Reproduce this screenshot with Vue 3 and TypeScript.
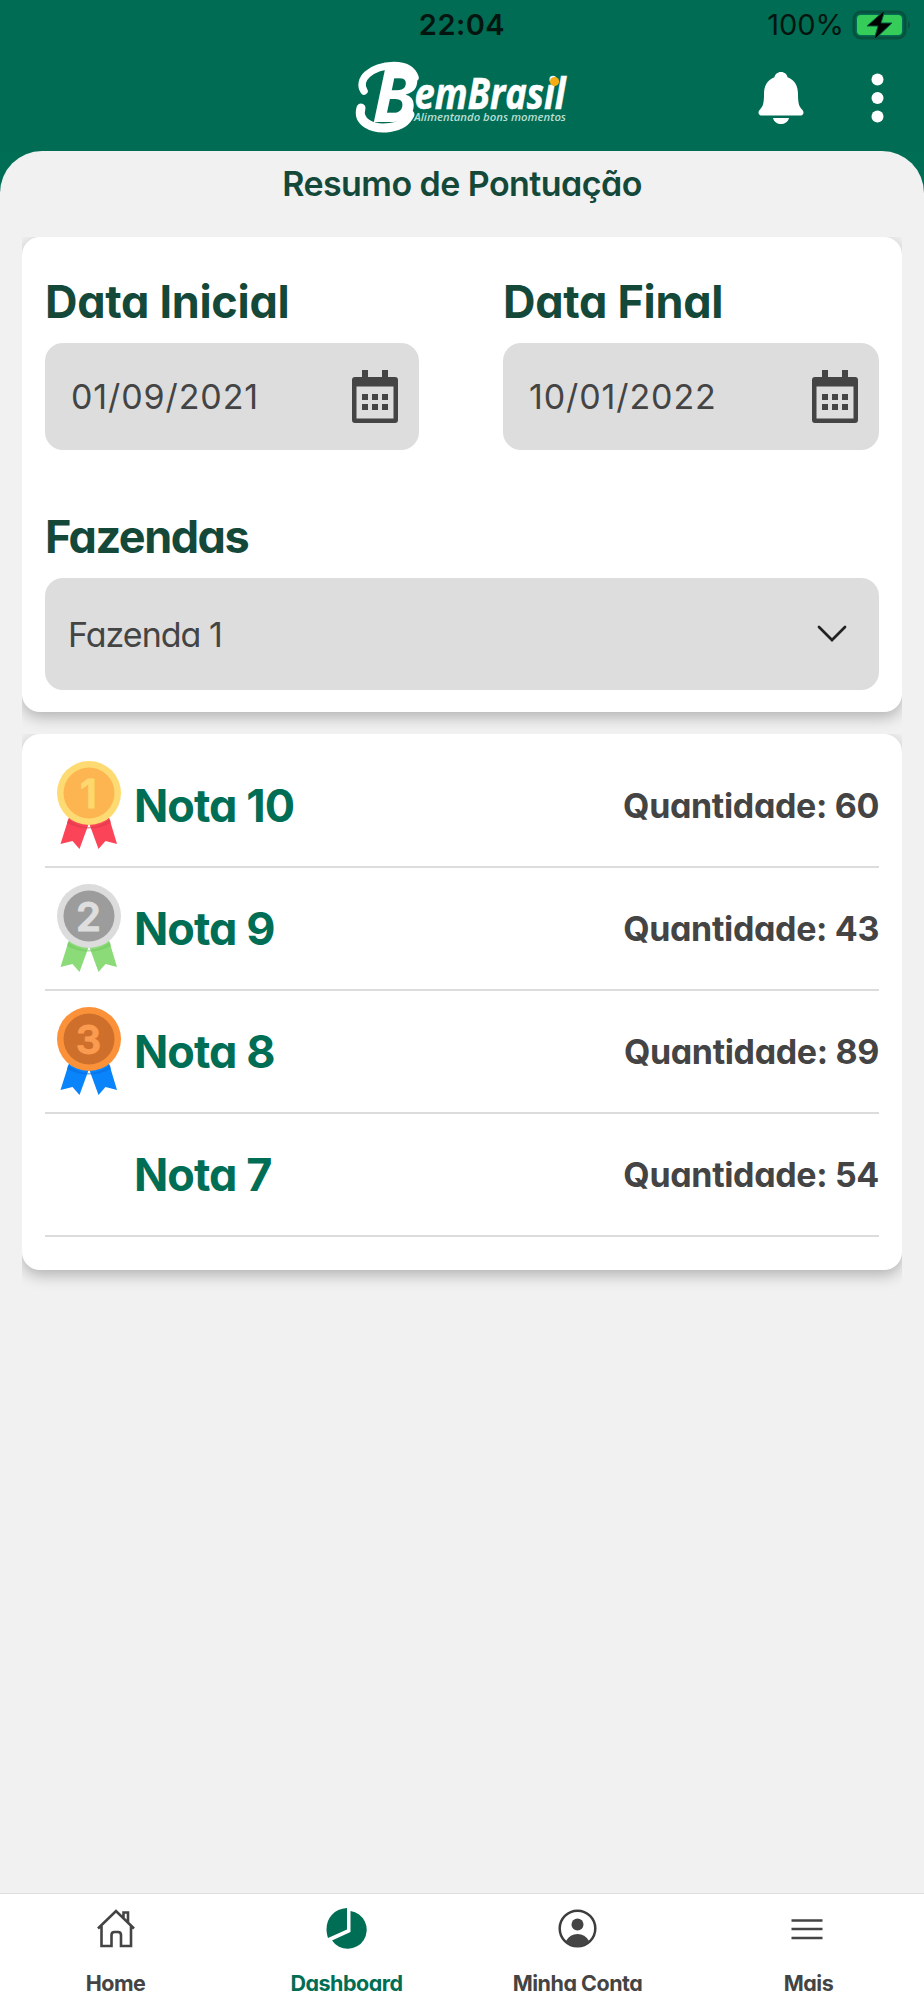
<script setup lang="ts">
interface ScoreRow {
  grade: number
  amount: number
  medal?: { place: number; rim: string; face: string; digit: string; ribbon: string; fold: string }
}

const dates: { label: string; value: string }[] = [
  { label: 'Data Inicial', value: '01/09/2021' },
  { label: 'Data Final', value: '10/01/2022' },
]

const rows: ScoreRow[] = [
  { grade: 10, amount: 60, medal: { place: 1, rim: '#fedb72', face: '#fdb552', digit: '#fed86e', ribbon: '#fc4458', fold: '#d83a49' } },
  { grade: 9, amount: 43, medal: { place: 2, rim: '#dcdcdd', face: '#9c9c9c', digit: '#dedede', ribbon: '#8bdb78', fold: '#73c75e' } },
  { grade: 8, amount: 89, medal: { place: 3, rim: '#fb923a', face: '#ce702c', digit: '#fb9b50', ribbon: '#0a84fb', fold: '#056ce0' } },
  { grade: 7, amount: 54 },
]
</script>

<template>
  <div class="screen">
    <header class="top">
      <div class="status">
        <span></span>
        <span class="clock">22:04</span>
        <span class="power">
          <span class="percent">100%</span>
          <svg width="62" height="34" viewBox="0 0 62 34">
            <rect x="2" y="4" width="51" height="26" rx="7" fill="none" stroke="#07523f" stroke-width="3" />
            <rect x="5" y="7" width="45" height="20" rx="4" fill="#35cc59" />
            <path d="M56 13q4 4 0 8z" fill="#07523f" />
            <path d="M33 2 15 18h11l-4 14 18-17H29z" fill="#000" stroke="#075b43" stroke-width="1" />
          </svg>
        </span>
      </div>
      <div class="brandbar">
        <span></span>
        <svg class="logo" width="216" height="76" viewBox="0 0 216 76">
          <path d="M10 31C3 20 16 6 40 5.500q17 0 21 12" fill="none" stroke="#fff" stroke-width="7.500" stroke-linecap="round" />
          <path d="M7 48C3 62 18 70 36 67.500q15-2 20-13" fill="none" stroke="#fff" stroke-width="9" stroke-linecap="round" />
          <text class="initial" x="18" y="62" textLength="46" lengthAdjust="spacingAndGlyphs">B</text>
          <text class="word" x="60.500" y="49" textLength="151" lengthAdjust="spacingAndGlyphs">emBrasil</text>
          <circle cx="200.500" cy="21.500" r="4.600" fill="#f6ad16" />
          <text class="motto" x="60" y="61" textLength="152" lengthAdjust="spacingAndGlyphs">Alimentando bons momentos</text>
        </svg>
        <span class="actions">
          <svg width="46" height="54" viewBox="0 0 46 54">
            <path d="M23 1c3.600 0 6 2.300 6.600 5.200C37 9 40 15 40 23c0 9 1 12.500 4 15.500 2.800 3 1.300 6-2 6H4c-3.300 0-4.800-3-2-6C5 35.500 6 32 6 23 6 15 9 9 16.400 6.200 17 3.300 19.400 1 23 1ZM15 47h16c-1 4-4.500 6-8 6s-7-2-8-6Z" fill="#fff" />
          </svg>
          <svg width="14" height="52" viewBox="0 0 14 52">
            <circle v-for="n in 3" :key="n" cx="7.500" :cy="7.500 + (n - 1) * 18.500" r="6" fill="#fff" />
          </svg>
        </span>
      </div>
    </header>

    <main class="sheet">
      <h1>Resumo de Pontuação</h1>

      <section class="card filters">
        <div class="dates">
          <label v-for="d in dates" :key="d.label" class="field">
            <span class="caption">{{ d.label }}</span>
            <span class="box">
              <span>{{ d.value }}</span>
              <svg width="48" height="55" viewBox="0 0 48 55">
                <path fill-rule="evenodd" fill="#444" d="M11 1h6v7h14V1h6v7h7q3 0 3 3v40q0 3-3 3H4q-3 0-3-3V11q0-3 3-3h7ZM5.500 17.500v32h37v-32Z" />
                <path fill="#444" d="M11 25h6v6h-6zM21 25h6v6h-6zM31 25h6v6h-6zM11 35h6v6h-6zM21 35h6v6h-6zM31 35h6v6h-6z" />
              </svg>
            </span>
          </label>
        </div>
        <label class="field farm">
          <span class="caption">Fazendas</span>
          <span class="box">
            <span>Fazenda 1</span>
            <svg width="30" height="18" viewBox="0 0 30 18">
              <path d="m2 2 13 13L28 2" fill="none" stroke="#222" stroke-width="2.700" stroke-linecap="round" />
            </svg>
          </span>
        </label>
      </section>

      <section class="card scores">
        <div v-for="r in rows" :key="r.grade" class="row">
          <span class="badge">
            <svg v-if="r.medal" width="66" height="92" viewBox="0 0 66 92">
              <path d="M14 55 4.500 85l12-3 7 8L33 64l9.500 26 7-8 11.500 3L52 55Z" :fill="r.medal.ribbon" />
              <path d="M12 60q21 16 42 0l1 4q-22 11-44 0Z" :fill="r.medal.fold" opacity=".55" />
              <circle cx="33" cy="34" r="32" :fill="r.medal.rim" />
              <circle cx="33" cy="34" r="25.500" :fill="r.medal.face" />
              <text class="place" x="32.500" y="48.500" text-anchor="middle" :fill="r.medal.digit" :stroke="r.medal.digit">{{ r.medal.place }}</text>
            </svg>
          </span>
          <span class="grade">Nota {{ r.grade }}</span>
          <span class="amount">Quantidade: {{ r.amount }}</span>
        </div>
      </section>
    </main>

    <nav class="tabs">
      <a class="tab">
        <svg width="42" height="44" viewBox="0 0 42 44" fill="none" stroke="#444" stroke-width="2.600">
          <path d="M3 21.500 21 4l18 17.500M6.500 19v20h10V28q0-3 3-3h3.500q3 0 3 3v11h10V19M28.500 11V5.500H33V15" />
        </svg>
        <span>Home</span>
      </a>
      <a class="tab active">
        <svg width="44" height="44" viewBox="0 0 44 44" fill="#006e54">
          <path d="M22 1v21.500L3 31C-2 16 6 2 22 1Z" />
          <path d="M25.500 4A19 19 0 1 1 7 33.500L25.500 25Z" />
        </svg>
        <span>Dashboard</span>
      </a>
      <a class="tab">
        <svg width="42" height="44" viewBox="0 0 42 44">
          <circle cx="20.500" cy="21.500" r="17.800" fill="none" stroke="#3d3d3d" stroke-width="2.500" />
          <circle cx="20.500" cy="17.500" r="6" fill="#444" />
          <path d="M9 34q4-7 11.500-7T32 34Q27.500 40 20.500 40T9 34Z" fill="#444" />
        </svg>
        <span>Minha Conta</span>
      </a>
      <a class="tab more">
        <svg width="42" height="44" viewBox="0 0 42 44" stroke="#444" stroke-width="2.500">
          <path d="M3.500 13.500h31M3.500 22h31M3.500 31h31" />
        </svg>
        <span>Mais</span>
      </a>
    </nav>
  </div>
</template>

<style>
body {
  margin: 0;
  background: #f1f1f1;
}
</style>

<style scoped>
.screen {
  width: 924px;
  height: 2000px;
  display: flex;
  flex-direction: column;
  background: #006e54;
  font-family: Inter, "Open Sans", sans-serif;
  font-feature-settings: "cv11";
  color: #444;
  overflow: hidden;
}
.top {
  height: 151px;
  flex: none;
  background: #006c53;
}
.status {
  height: 50px;
  display: grid;
  grid-template-columns: 1fr auto 1fr;
  align-items: center;
  color: #04150f;
}
.clock {
  font-size: 29px;
  font-weight: 600;
  line-height: 50px;
  letter-spacing: 0.5px;
}
.power {
  display: flex;
  align-items: center;
  justify-content: flex-end;
  padding-right: 10px;
  gap: 8px;
  height: 48px;
}
.percent {
  font-size: 29px;
  line-height: 50px;
}
.brandbar {
  height: 96px;
  display: grid;
  grid-template-columns: 1fr auto 1fr;
  align-items: center;
}
.logo {
  display: block;
  overflow: visible;
}
.logo text {
  fill: #fff;
  font-family: "Open Sans", sans-serif;
  font-style: italic;
  font-weight: 700;
}
.logo .initial { font-size: 74px; }
.logo .word { font-size: 43px; stroke: #fff; stroke-width: 0.6px; }
.logo .motto { font-size: 11.5px; font-weight: 600; fill: #b9dfd3; }
.actions {
  display: flex;
  align-items: center;
  justify-content: flex-end;
  gap: 66px;
  padding-right: 40px;
}
.sheet {
  flex: 1;
  background: #f1f1f1;
  border-radius: 42px 42px 0 0;
  padding: 0 22px;
}
h1 {
  margin: 0;
  height: 86px;
  line-height: 66px;
  text-align: center;
  font-size: 34px;
  font-weight: 600;
  letter-spacing: -0.55px;
  color: #14493a;
}
.card {
  background: #fff;
  border-radius: 18px;
  box-shadow: 0 5px 15px rgba(0, 0, 0, 0.27);
  clip-path: inset(0 0 -34px 0);
  box-sizing: border-box;
  padding: 0 23px;
}
.filters {
  height: 475px;
  padding-top: 25px;
}
.dates {
  display: grid;
  grid-template-columns: 374px 376px;
  justify-content: space-between;
}
.field {
  display: block;
}
.caption {
  display: block;
  height: 81px;
  line-height: 80px;
  font-size: 45px;
  font-weight: 650;
  letter-spacing: -0.3px;
  color: #14493a;
}
.box {
  box-sizing: border-box;
  height: 107px;
  display: flex;
  align-items: center;
  justify-content: space-between;
  padding: 0 20px 0 26px;
  border-radius: 18px;
  background: #ddd;
  font-size: 34px;
  font-weight: 400;
  letter-spacing: 0.9px;
}
.farm {
  margin-top: 47px;
}
.farm .caption {
  letter-spacing: -1.5px;
}
.farm .box {
  height: 112px;
  padding: 0 32px 0 23px;
  letter-spacing: -1px;
}
.scores {
  margin-top: 22px;
  height: 536px;
  padding-top: 11px;
}
.row {
  box-sizing: border-box;
  height: 123px;
  display: flex;
  align-items: center;
  border-bottom: 2px solid #dcdcdc;
}
.badge {
  width: 89px;
  box-sizing: border-box;
  padding: 0 0 1px 11px;
  display: flex;
}
.place {
  font-family: Inter, sans-serif;
  font-size: 40px;
  font-weight: 600;
  stroke-width: 1px;
  stroke-linejoin: round;
}
.grade {
  flex: 1;
  font-size: 45px;
  font-weight: 650;
  letter-spacing: -0.95px;
  color: #006e54;
}
.amount {
  font-size: 34px;
  font-weight: 650;
  letter-spacing: -0.35px;
}
.tabs {
  flex: none;
  height: 107px;
  box-sizing: border-box;
  border-top: 1px solid #dedede;
  background: #fff;
  display: grid;
  grid-template-columns: repeat(4, 1fr);
}
.tab {
  display: flex;
  flex-direction: column;
  align-items: center;
  padding-top: 13px;
  font-size: 21.500px;
  font-weight: 650;
  letter-spacing: -0.5px;
}
.tab span {
  line-height: 30px;
  margin-top: 17px;
}
.active {
  color: #006e54;
}
</style>
